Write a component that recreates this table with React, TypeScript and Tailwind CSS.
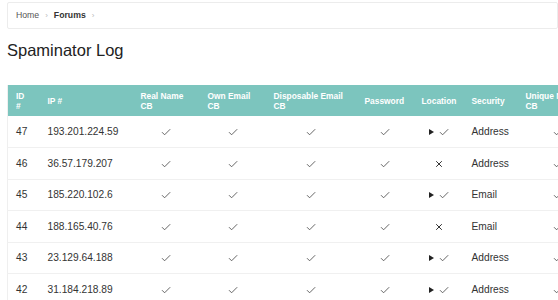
import React from 'react'

type Row = {
    id: number;
    ip: string;
    location: 'pass' | 'fail';
    security: string;
}

const rows: Row[] = [
    { id: 47, ip: '193.201.224.59', location: 'pass', security: 'Address' },
    { id: 46, ip: '36.57.179.207', location: 'fail', security: 'Address' },
    { id: 45, ip: '185.220.102.6', location: 'pass', security: 'Email' },
    { id: 44, ip: '188.165.40.76', location: 'fail', security: 'Email' },
    { id: 43, ip: '23.129.64.188', location: 'pass', security: 'Address' },
    { id: 42, ip: '31.184.218.89', location: 'pass', security: 'Address' },
]

const columns = [
    { key: 'id', label: ['ID', '#'], width: 'w-[32px]' },
    { key: 'ip', label: ['IP #'], width: 'w-[93px]' },
    { key: 'real', label: ['Real Name', 'CB'], width: 'w-[67px]' },
    { key: 'own', label: ['Own Email', 'CB'], width: 'w-[66px]' },
    { key: 'disp', label: ['Disposable Email', 'CB'], width: 'w-[91px]' },
    { key: 'pass', label: ['Password'], width: 'w-[57px]' },
    { key: 'loc', label: ['Location'], width: 'w-[50px]' },
    { key: 'sec', label: ['Security'], width: 'w-[54px]' },
    { key: 'uniq', label: ['Unique Name', 'CB'], width: 'w-[80px]' },
]

function Check() {
    return (
        <svg width="10" height="8" viewBox="0 0 10 8" className="inline-block">
            <path d="M1 4.2 L3.6 6.8 L9.2 1.2" fill="none" stroke="#555" strokeWidth="0.9" />
        </svg>
    )
}

function Cross() {
    return (
        <svg width="8" height="8" viewBox="0 0 8 8" className="inline-block">
            <path d="M1.2 1.2 L6.8 6.8 M6.8 1.2 L1.2 6.8" fill="none" stroke="#333" strokeWidth="1" />
        </svg>
    )
}

function Arrow() {
    return (
        <svg width="5" height="6" viewBox="0 0 5 6" className="inline-block">
            <polygon points="0,0 5,3 0,6" fill="#222" />
        </svg>
    )
}

function CheckCell() {
    return (
        <td className="text-center align-middle">
            <Check />
        </td>
    )
}

export default function App() {
    return (
        <div className="w-[558px] h-[300px] overflow-hidden bg-white pl-[7px] pt-[2px] font-['Liberation_Sans',Arial,sans-serif] text-[#333]">
            <div className="flex items-center h-[27px] border border-[#ececec] rounded-[2px] pl-[8px] text-[8.7px]">
                <span className="text-[#555]">Home</span>
                <span className="mx-[6px] text-[#bbb] text-[8px]">›</span>
                <span className="font-bold text-[#333]">Forums</span>
                <span className="mx-[6px] text-[#bbb] text-[8px]">›</span>
            </div>

            <h1 className="mt-[11px] h-[20px] leading-[20px] text-[16.5px] text-[#222]">Spaminator Log</h1>

            <div className="mt-[25px] overflow-hidden">
                <table className="table-fixed border-collapse w-[590px] border-l border-[#efefef]">
                    <colgroup>
                        {columns.map((c) => (
                            <col key={c.key} className={c.width} />
                        ))}
                    </colgroup>
                    <thead>
                        <tr className="h-[31px] bg-[#7cc5be]">
                            {columns.map((c) => (
                                <th key={c.key} className="px-[8px] text-left align-middle font-bold text-white text-[8.4px] leading-[10px] whitespace-nowrap">
                                    {c.label.map((l) => (
                                        <div key={l}>{l}</div>
                                    ))}
                                </th>
                            ))}
                        </tr>
                    </thead>
                    <tbody>
                        {rows.map((r) => (
                            <tr key={r.id} className="h-[31.5px] border-b border-[#f0f0f0] text-[10.2px]">
                                <td className="px-[8px] align-middle">{r.id}</td>
                                <td className="px-[8px] align-middle">{r.ip}</td>
                                <CheckCell />
                                <CheckCell />
                                <CheckCell />
                                <CheckCell />
                                <td className="text-center align-middle">
                                    {r.location === 'pass' ? (
                                        <span className="inline-flex items-center gap-[5px]">
                                            <Arrow />
                                            <Check />
                                        </span>
                                    ) : (
                                        <Cross />
                                    )}
                                </td>
                                <td className="px-[8px] align-middle">{r.security}</td>
                                <CheckCell />
                            </tr>
                        ))}
                    </tbody>
                </table>
            </div>
        </div>
    )
}
